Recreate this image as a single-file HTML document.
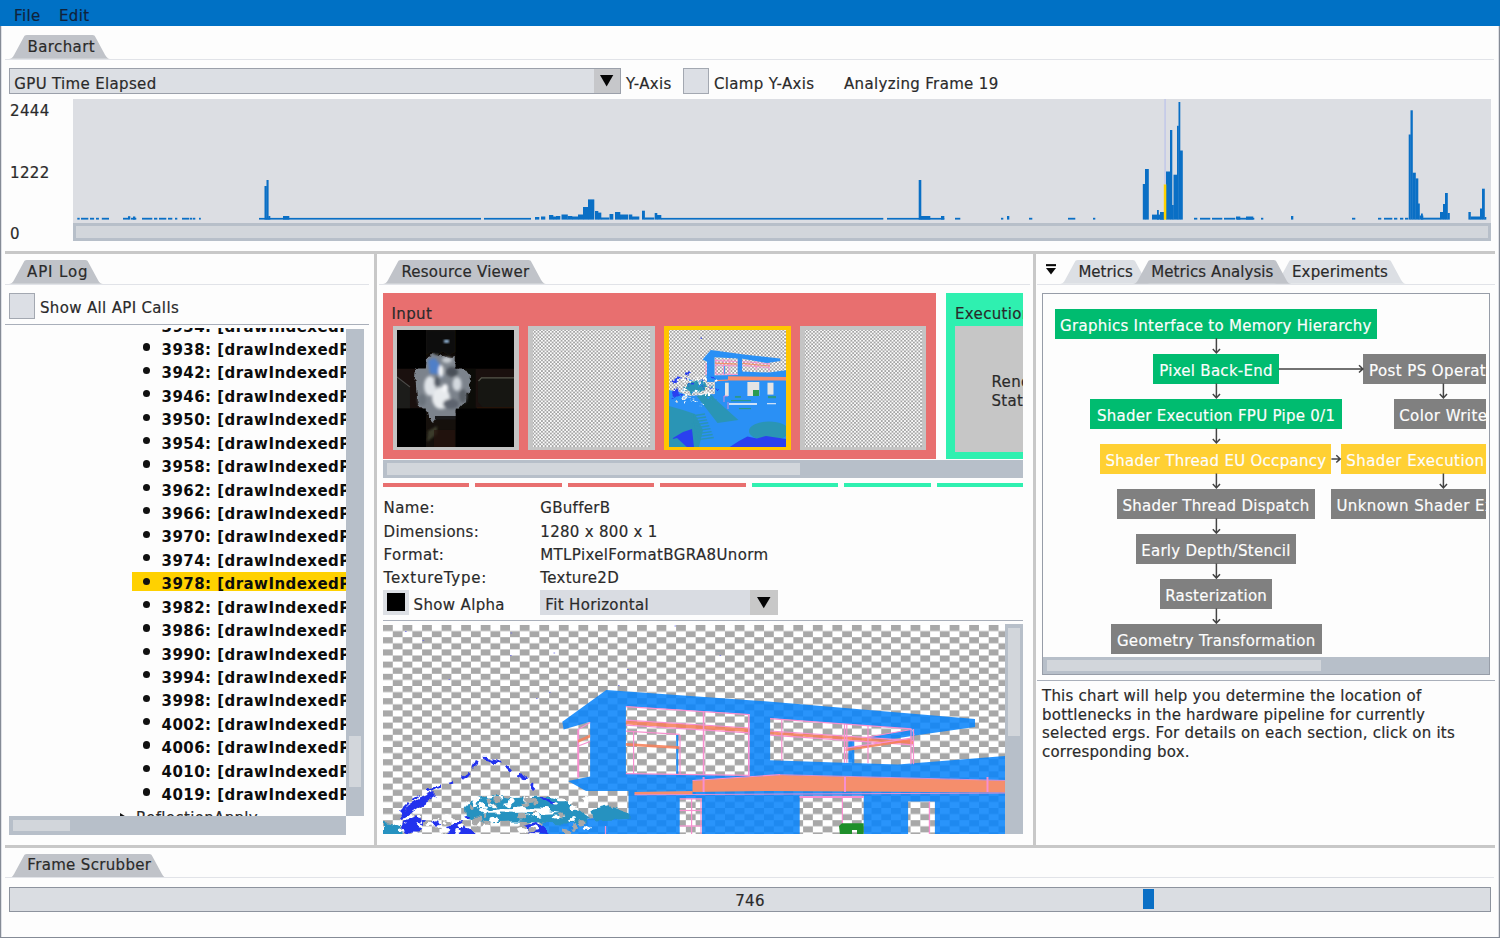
<!DOCTYPE html>
<html><head><meta charset="utf-8"><title>Frame Analyzer</title>
<style>
html,body{margin:0;padding:0;}
body{width:1500px;height:938px;overflow:hidden;background:#fdfdfd;position:relative;font-family:"DejaVu Sans","Liberation Sans",sans-serif;font-size:15px;letter-spacing:0.34px;color:#2a2a2a;-webkit-text-stroke-width:0.18px;}
.abs{position:absolute;}
.t{position:absolute;white-space:nowrap;line-height:20px;height:20px;margin-top:2px;}
#menubar{left:0;top:0;width:1500px;height:26px;background:#0071c5;}
#frame{left:0;top:26px;width:1498px;height:911px;border-left:1px solid #858b96;border-right:1px solid #858b96;border-bottom:1px solid #858b96;box-shadow:inset 1px 0 0 #dfe1e6, inset -1px 0 0 #dfe1e6;}
.hsplit{background:#c8c8c8;height:3px;left:5px;width:1490px;}
.vsplit{background:#c8c8c8;width:3px;}
.tabline{height:1px;background:#e1e3e8;}
.dline{height:1px;background:#a9afba;}
.tab{position:absolute;height:24px;}
.tab svg{position:absolute;left:0;top:0;}
.cb{position:absolute;width:24px;height:24px;border:1px solid #a3a8b1;background:#dcdfe5;}
.track{position:absolute;background:#b7bfc9;}
.thumb{position:absolute;background:#d2d6db;}
.row{position:absolute;left:161px;white-space:nowrap;font-weight:bold;color:#0c0c0c;-webkit-text-stroke-width:0;letter-spacing:0.45px;line-height:20px;height:20px;}
.row::before{content:"";position:absolute;left:-18.5px;top:3.4px;width:7.2px;height:7.2px;border-radius:50%;background:#111;}
.nb{position:absolute;height:30px;line-height:30px;color:#fdfdfd;white-space:nowrap;text-align:center;letter-spacing:0.28px;overflow:hidden;}
.nb span{position:relative;top:2px;}
.g{background:#00bc70;} .y{background:#ffd033;} .k{background:#808080;}
</style></head><body>
<div class="abs" id="menubar"></div>
<div class="abs" id="frame"></div>
<div class="t" style="left:14px;top:4px;color:#10233a">File</div>
<div class="t" style="left:59px;top:4px;color:#10233a">Edit</div>

<!-- BARCHART PANEL -->
<div id="barchart"><div class="tab" style="left:9.2px;top:35.2px;width:101.2px"><svg width="101.2" height="23.8"><path d="M0 23.8 C2 23.8 3.6 22.8 5.2 19.8 L14.8 2 C15.3 0.8 16.1 0 17.8 0 L83.4 0 C85.10000000000001 0 85.9 0.8 86.4 2 L96.0 19.8 C97.60000000000001 22.8 99.2 23.8 101.2 23.8 Z" fill="#c0c3c9"/></svg><div class="t" style="left:18.3px;top:-0.2px;letter-spacing:0.4px">Barchart</div></div>
<div class="abs tabline" style="left:5px;top:59px;width:1489px"></div>
<div class="abs" style="left:9px;top:68px;width:609.6px;height:24px;border:1px solid #9ba0aa;background:#dcdfe4"></div>
<div class="abs" style="left:593.6px;top:69px;width:26px;height:24px;background:#c6c7ca"></div>
<svg class="abs" style="left:600.4px;top:74.8px" width="14" height="12"><path d="M0 0 L13.3 0 L6.65 11.5 Z" fill="#050505"/></svg>
<div class="t" style="left:14.3px;top:72px">GPU Time Elapsed</div>
<div class="t" style="left:626px;top:72px">Y-Axis</div>
<div class="cb" style="left:683px;top:68px"></div>
<div class="t" style="left:714px;top:72px">Clamp Y-Axis</div>
<div class="t" style="left:844px;top:72px">Analyzing Frame 19</div>
<div class="t" style="left:10px;top:99px">2444</div>
<div class="t" style="left:10px;top:161px">1222</div>
<div class="t" style="left:10px;top:222.3px">0</div>
<svg class="abs" style="left:72.8px;top:98.6px;background:#dcdee3" width="1418" height="124"><rect x="4.3" y="118.8" width="2.4" height="1.8" fill="#0a6fc5"/><rect x="8.0" y="118.8" width="7.3" height="1.8" fill="#0a6fc5"/><rect x="17.0" y="118.8" width="4.1" height="1.8" fill="#0a6fc5"/><rect x="23.0" y="118.8" width="2.9" height="1.8" fill="#0a6fc5"/><rect x="28.8" y="118.8" width="7.2" height="1.8" fill="#0a6fc5"/><rect x="50.0" y="118.8" width="5.3" height="1.8" fill="#0a6fc5"/><rect x="58.0" y="118.8" width="5.3" height="1.8" fill="#0a6fc5"/><rect x="69.0" y="118.8" width="10.3" height="1.8" fill="#0a6fc5"/><rect x="81.0" y="118.8" width="3.3" height="1.8" fill="#0a6fc5"/><rect x="86.0" y="118.8" width="7.3" height="1.8" fill="#0a6fc5"/><rect x="95.0" y="118.8" width="4.3" height="1.8" fill="#0a6fc5"/><rect x="102.0" y="118.8" width="2.3" height="1.8" fill="#0a6fc5"/><rect x="109.0" y="118.8" width="7.3" height="1.8" fill="#0a6fc5"/><rect x="117.0" y="118.8" width="2.3" height="1.8" fill="#0a6fc5"/><rect x="120.0" y="118.8" width="2.3" height="1.8" fill="#0a6fc5"/><rect x="126.0" y="118.8" width="1.8" height="1.8" fill="#0a6fc5"/><rect x="55.0" y="117.2" width="2.3" height="3.4" fill="#0a6fc5"/><rect x="60.0" y="117.5" width="2.3" height="3.1" fill="#0a6fc5"/><rect x="186.0" y="118.9" width="276.3" height="1.7" fill="#0a6fc5"/><rect x="191.5" y="87.0" width="2.3" height="33.6" fill="#0a6fc5"/><rect x="193.5" y="81.0" width="2.1" height="39.6" fill="#0a6fc5"/><rect x="195.3" y="117.0" width="2.0" height="3.6" fill="#0a6fc5"/><rect x="210.0" y="117.0" width="6.3" height="3.6" fill="#0a6fc5"/><rect x="462.0" y="118.0" width="4.3" height="2.6" fill="#0a6fc5"/><rect x="468.0" y="117.5" width="4.3" height="3.1" fill="#0a6fc5"/><rect x="476.0" y="116.0" width="4.3" height="4.6" fill="#0a6fc5"/><rect x="480.0" y="117.5" width="3.3" height="3.1" fill="#0a6fc5"/><rect x="483.0" y="117.0" width="4.3" height="3.6" fill="#0a6fc5"/><rect x="488.5" y="115.5" width="6.3" height="5.1" fill="#0a6fc5"/><rect x="494.5" y="117.0" width="4.8" height="3.6" fill="#0a6fc5"/><rect x="499.0" y="117.5" width="6.3" height="3.1" fill="#0a6fc5"/><rect x="505.0" y="115.5" width="5.3" height="5.1" fill="#0a6fc5"/><rect x="510.0" y="108.0" width="5.3" height="12.6" fill="#0a6fc5"/><rect x="515.0" y="100.4" width="6.3" height="20.2" fill="#0a6fc5"/><rect x="522.0" y="112.0" width="3.3" height="8.6" fill="#0a6fc5"/><rect x="525.0" y="113.6" width="3.3" height="7.0" fill="#0a6fc5"/><rect x="528.0" y="118.5" width="8.3" height="2.1" fill="#0a6fc5"/><rect x="536.5" y="115.0" width="3.8" height="5.6" fill="#0a6fc5"/><rect x="542.0" y="113.0" width="5.3" height="7.6" fill="#0a6fc5"/><rect x="547.0" y="115.5" width="8.3" height="5.1" fill="#0a6fc5"/><rect x="556.0" y="115.5" width="3.3" height="5.1" fill="#0a6fc5"/><rect x="559.0" y="117.5" width="7.3" height="3.1" fill="#0a6fc5"/><rect x="569.0" y="111.7" width="2.9" height="8.9" fill="#0a6fc5"/><rect x="571.6" y="118.5" width="9.7" height="2.1" fill="#0a6fc5"/><rect x="581.7" y="114.0" width="2.6" height="6.6" fill="#0a6fc5"/><rect x="584.0" y="116.0" width="4.3" height="4.6" fill="#0a6fc5"/><rect x="588.0" y="118.9" width="222.3" height="1.7" fill="#0a6fc5"/><rect x="814.0" y="118.9" width="57.3" height="1.7" fill="#0a6fc5"/><rect x="845.7" y="81.0" width="2.6" height="39.6" fill="#0a6fc5"/><rect x="848.0" y="117.0" width="9.3" height="3.6" fill="#0a6fc5"/><rect x="868.0" y="117.0" width="3.3" height="3.6" fill="#0a6fc5"/><rect x="882.0" y="118.8" width="5.3" height="1.8" fill="#0a6fc5"/><rect x="928.0" y="118.8" width="2.3" height="1.8" fill="#0a6fc5"/><rect x="956.0" y="118.8" width="3.3" height="1.8" fill="#0a6fc5"/><rect x="995.0" y="118.8" width="7.3" height="1.8" fill="#0a6fc5"/><rect x="1020.0" y="118.8" width="2.3" height="1.8" fill="#0a6fc5"/><rect x="934.0" y="117.0" width="2.3" height="3.6" fill="#0a6fc5"/><rect x="1069.8" y="85.0" width="2.5" height="35.6" fill="#0a6fc5"/><rect x="1072.0" y="70.0" width="3.8" height="50.6" fill="#0a6fc5"/><rect x="1079.0" y="115.6" width="12.1" height="5.0" fill="#0a6fc5"/><rect x="1084.0" y="111.0" width="1.8" height="9.6" fill="#0a6fc5"/><rect x="1087.0" y="113.0" width="4.1" height="7.6" fill="#0a6fc5"/><rect x="1093.0" y="72.5" width="4.3" height="48.1" fill="#0a6fc5"/><rect x="1097.0" y="31.0" width="2.3" height="89.6" fill="#0a6fc5"/><rect x="1099.0" y="106.0" width="1.8" height="14.6" fill="#0a6fc5"/><rect x="1100.5" y="75.7" width="3.8" height="44.9" fill="#0a6fc5"/><rect x="1104.0" y="26.8" width="1.8" height="93.8" fill="#0a6fc5"/><rect x="1105.5" y="3.0" width="1.8" height="117.6" fill="#0a6fc5"/><rect x="1107.0" y="51.5" width="2.8" height="69.1" fill="#0a6fc5"/><rect x="1090.8" y="85.3" width="2.5" height="35.3" fill="#ffd200"/><rect x="1091.2" y="0" width="1.8" height="85.3" fill="#c6cbe8"/><rect x="1121.0" y="118.8" width="3.3" height="1.8" fill="#0a6fc5"/><rect x="1127.0" y="118.8" width="10.3" height="1.8" fill="#0a6fc5"/><rect x="1139.0" y="118.8" width="10.3" height="1.8" fill="#0a6fc5"/><rect x="1151.0" y="118.8" width="11.3" height="1.8" fill="#0a6fc5"/><rect x="1164.0" y="118.8" width="17.3" height="1.8" fill="#0a6fc5"/><rect x="1188.0" y="118.8" width="2.3" height="1.8" fill="#0a6fc5"/><rect x="1279.0" y="118.8" width="3.3" height="1.8" fill="#0a6fc5"/><rect x="1305.0" y="118.8" width="3.3" height="1.8" fill="#0a6fc5"/><rect x="1311.0" y="118.8" width="8.3" height="1.8" fill="#0a6fc5"/><rect x="1321.0" y="118.8" width="3.3" height="1.8" fill="#0a6fc5"/><rect x="1327.0" y="118.8" width="3.3" height="1.8" fill="#0a6fc5"/><rect x="1332.0" y="118.8" width="3.3" height="1.8" fill="#0a6fc5"/><rect x="1163.0" y="117.5" width="4.3" height="3.1" fill="#0a6fc5"/><rect x="1173.0" y="117.5" width="7.3" height="3.1" fill="#0a6fc5"/><rect x="1218.0" y="117.0" width="2.3" height="3.6" fill="#0a6fc5"/><rect x="1335.7" y="35.5" width="2.1" height="85.1" fill="#0a6fc5"/><rect x="1337.5" y="11.3" width="2.3" height="109.3" fill="#0a6fc5"/><rect x="1339.5" y="73.7" width="3.3" height="46.9" fill="#0a6fc5"/><rect x="1342.5" y="79.4" width="2.8" height="41.2" fill="#0a6fc5"/><rect x="1345.0" y="104.5" width="1.8" height="16.1" fill="#0a6fc5"/><rect x="1346.5" y="116.5" width="3.8" height="4.1" fill="#0a6fc5"/><rect x="1348.0" y="114.5" width="1.8" height="6.1" fill="#0a6fc5"/><rect x="1350.0" y="118.7" width="17.3" height="1.9" fill="#0a6fc5"/><rect x="1367.0" y="113.0" width="3.3" height="7.6" fill="#0a6fc5"/><rect x="1370.0" y="105.0" width="2.3" height="15.6" fill="#0a6fc5"/><rect x="1372.0" y="94.0" width="2.8" height="26.6" fill="#0a6fc5"/><rect x="1374.5" y="114.0" width="2.3" height="6.6" fill="#0a6fc5"/><rect x="1395.4" y="113.0" width="2.4" height="7.6" fill="#0a6fc5"/><rect x="1397.5" y="117.5" width="9.8" height="3.1" fill="#0a6fc5"/><rect x="1407.0" y="109.5" width="2.3" height="11.1" fill="#0a6fc5"/><rect x="1409.0" y="89.7" width="2.8" height="30.9" fill="#0a6fc5"/><rect x="1411.5" y="118.0" width="1.8" height="2.6" fill="#0a6fc5"/><rect x="408" y="115" width="3" height="6" fill="#dcdee3"/><rect x="458" y="115" width="4" height="6" fill="#dcdee3"/></svg>
<div class="track" style="left:72.8px;top:222.8px;width:1418px;height:18.3px"></div>
<div class="thumb" style="left:75.9px;top:225.9px;width:1411.8px;height:12.2px"></div>
<div class="abs hsplit" style="top:251px"></div>
</div><!--/barchart-->
<!-- API LOG -->
<div id="apilog"><div class="tab" style="left:9px;top:260.3px;width:94px"><svg width="94" height="23.8"><path d="M0 23.8 C2 23.8 3.6 22.8 5.2 19.8 L14.8 2 C15.3 0.8 16.1 0 17.8 0 L76.2 0 C77.9 0 78.7 0.8 79.2 2 L88.8 19.8 C90.4 22.8 92 23.8 94 23.8 Z" fill="#c0c3c9"/></svg><div class="t" style="left:18.1px;top:-0.2px;letter-spacing:0.85px">API Log</div></div>
<div class="abs tabline" style="left:5px;top:284px;width:364px"></div>
<div class="cb" style="left:9px;top:293px"></div>
<div class="t" style="left:40px;top:296px">Show All API Calls</div>
<div class="abs dline" style="left:5px;top:324px;width:364px"></div>
<div class="abs" style="left:9px;top:328px;width:337px;height:488px;overflow:hidden"><div class="row" style="left:152.5px;top:-13.4px;margin-top:2px">3934: [drawIndexedPrimitives]</div><div class="row" style="left:152.5px;top:10.0px;margin-top:2px">3938: [drawIndexedPrimitives]</div><div class="row" style="left:152.5px;top:33.4px;margin-top:2px">3942: [drawIndexedPrimitives]</div><div class="row" style="left:152.5px;top:56.8px;margin-top:2px">3946: [drawIndexedPrimitives]</div><div class="row" style="left:152.5px;top:80.3px;margin-top:2px">3950: [drawIndexedPrimitives]</div><div class="row" style="left:152.5px;top:103.7px;margin-top:2px">3954: [drawIndexedPrimitives]</div><div class="row" style="left:152.5px;top:127.1px;margin-top:2px">3958: [drawIndexedPrimitives]</div><div class="row" style="left:152.5px;top:150.5px;margin-top:2px">3962: [drawIndexedPrimitives]</div><div class="row" style="left:152.5px;top:173.9px;margin-top:2px">3966: [drawIndexedPrimitives]</div><div class="row" style="left:152.5px;top:197.4px;margin-top:2px">3970: [drawIndexedPrimitives]</div><div class="row" style="left:152.5px;top:220.8px;margin-top:2px">3974: [drawIndexedPrimitives]</div><div class="abs" style="left:123.30000000000001px;top:244.2px;width:230px;height:18.4px;background:#ffd100"></div><div class="row" style="left:152.5px;top:244.2px;margin-top:2px">3978: [drawIndexedPrimitives]</div><div class="row" style="left:152.5px;top:267.6px;margin-top:2px">3982: [drawIndexedPrimitives]</div><div class="row" style="left:152.5px;top:291.0px;margin-top:2px">3986: [drawIndexedPrimitives]</div><div class="row" style="left:152.5px;top:314.5px;margin-top:2px">3990: [drawIndexedPrimitives]</div><div class="row" style="left:152.5px;top:337.9px;margin-top:2px">3994: [drawIndexedPrimitives]</div><div class="row" style="left:152.5px;top:361.3px;margin-top:2px">3998: [drawIndexedPrimitives]</div><div class="row" style="left:152.5px;top:384.7px;margin-top:2px">4002: [drawIndexedPrimitives]</div><div class="row" style="left:152.5px;top:408.1px;margin-top:2px">4006: [drawIndexedPrimitives]</div><div class="row" style="left:152.5px;top:431.6px;margin-top:2px">4010: [drawIndexedPrimitives]</div><div class="row" style="left:152.5px;top:455.0px;margin-top:2px">4019: [drawIndexedPrimitives]</div><div class="t" style="left:127px;top:478.4px">ReflectionApply</div><svg class="abs" style="left:110px;top:485.4px" width="10" height="10"><path d="M1 0 L9 5 L1 10 Z" fill="#111"/></svg></div>
<div class="track" style="left:346px;top:328.5px;width:18.1px;height:487.5px"></div>
<div class="thumb" style="left:349px;top:736px;width:12px;height:51.4px"></div>
<div class="track" style="left:9.3px;top:816px;width:336.7px;height:18.8px"></div>
<div class="thumb" style="left:12.6px;top:820.3px;width:57.4px;height:10.6px"></div>
<div class="abs vsplit" style="left:374px;top:254px;height:591px"></div>
<div class="abs vsplit" style="left:1032.5px;top:254px;height:591px;width:3.5px"></div>
<div class="abs hsplit" style="top:844.5px"></div>
</div><!--/apilog-->
<!-- RESOURCE VIEWER -->
<div id="resview"><div class="tab" style="left:383.2px;top:260.3px;width:163.2px"><svg width="163.2" height="23.8"><path d="M0 23.8 C2 23.8 3.6 22.8 5.2 19.8 L14.8 2 C15.3 0.8 16.1 0 17.8 0 L145.39999999999998 0 C147.09999999999997 0 147.89999999999998 0.8 148.39999999999998 2 L158.0 19.8 C159.6 22.8 161.2 23.8 163.2 23.8 Z" fill="#c0c3c9"/></svg><div class="t" style="left:18.2px;top:-0.2px;letter-spacing:0.23px">Resource Viewer</div></div>
<div class="abs tabline" style="left:378.5px;top:284px;width:651.5px"></div>
<div class="abs" style="left:383px;top:293px;width:640px;height:167px;overflow:hidden"><div class="abs" style="left:0.2px;top:0.2px;width:552.8px;height:166.3px;background:#e86f6f"></div><div class="t" style="left:8.6px;top:9.4px">Input</div><svg class="abs" width="0" height="0" style="left:0;top:0"><defs><pattern id="dots" width="3.57" height="3.57" patternUnits="userSpaceOnUse"><rect width="3.57" height="3.57" fill="#fbfbfb"/><rect x="0.892" y="0.892" width="1.785" height="1.785" fill="#a4a4a4"/><rect x="-0.892" y="-0.892" width="1.785" height="1.785" fill="#a4a4a4"/><rect x="2.677" y="-0.892" width="1.785" height="1.785" fill="#a4a4a4"/><rect x="-0.892" y="2.677" width="1.785" height="1.785" fill="#a4a4a4"/><rect x="2.677" y="2.677" width="1.785" height="1.785" fill="#a4a4a4"/></pattern></defs></svg><div class="abs" style="left:9.5px;top:33px;width:126.6px;height:124.3px;background:#c4c4c4"></div><div class="abs" id="th0" style="left:14.2px;top:36.5px;width:117.2px;height:117.2px;background:#000;overflow:hidden"><svg class="abs" style="left:0;top:0" width="117.2" height="117.2" viewBox="0 0 117.2 117.2"><defs><filter id="b1" x="-20%" y="-20%" width="140%" height="140%"><feGaussianBlur stdDeviation="1.6"/></filter><filter id="b2" x="-20%" y="-20%" width="140%" height="140%"><feGaussianBlur stdDeviation="0.8"/></filter><filter id="cl" x="-10%" y="-10%" width="120%" height="120%"><feTurbulence type="fractalNoise" baseFrequency="0.12" numOctaves="3" seed="8" result="n"/><feDisplacementMap in="SourceGraphic" in2="n" scale="7" xChannelSelector="R" yChannelSelector="G"/></filter><clipPath id="cross"><path d="M28.8 0 H58.7 V38.5 H117.2 V78.5 H58.7 V117.2 H28.8 V78.5 H0 V38.5 H28.8 Z"/></clipPath></defs><rect width="117.2" height="117.2" fill="#000"/><g clip-path="url(#cross)"><rect x="28.8" y="0" width="29.9" height="117.2" fill="#120d0a"/><rect x="0" y="38.5" width="117.2" height="40" fill="#1a100e"/><rect x="58.7" y="38.5" width="20" height="40" fill="#0c0c08"/><path d="M84 47.5 H117.2 V78 H86 L81 72 V51 Z" fill="#161612"/><path d="M81.5 51 L84.5 47.8 H117.2" stroke="#55554a" stroke-width="1.3" fill="none"/><rect x="80" y="77.2" width="37.2" height="1.3" fill="#2a1408"/><path d="M0 48 L13 58 V78.5 H0 Z" fill="#1c1c1a"/><path d="M0 47 L13 57" stroke="#4a4a48" stroke-width="1.1"/><rect x="28.8" y="86" width="29.9" height="31.2" fill="#15100c"/><path d="M30 112 L31 101 L40 96 L40 104 Z" fill="#3a3a2c" filter="url(#b2)"/><rect x="37" y="100" width="21" height="17" fill="#26140e" opacity="0.7"/><g filter="url(#cl)"><path d="M30 26 L40 24 L50 28 L58.7 26 V38.5 L68 39 L73 46 L72 60 L68 72 L62 78.5 H58.7 V86 L40 86.5 L36 92 L32 88 L29 78.5 L22 78 L19 66 L17.5 50 L19 39 L28.8 38.5 Z" fill="#7c838c"/></g><g filter="url(#b1)"><ellipse cx="44" cy="68" rx="9" ry="11" fill="#e8ebee"/><ellipse cx="33" cy="56" rx="6" ry="10" fill="#dfe3e8"/><ellipse cx="60" cy="54" rx="4.5" ry="7" fill="#d4d9df"/><ellipse cx="50" cy="30" rx="5" ry="3" fill="#c8cdd3"/><path d="M31 30 L38 28 L44 36 L46 48 L40 44 L33 44 Z" fill="#4f7fc8"/><ellipse cx="55" cy="42" rx="6" ry="5" fill="#4a5058"/><ellipse cx="54" cy="74" rx="8" ry="5" fill="#5d646e"/><ellipse cx="25" cy="70" rx="4" ry="6" fill="#6a727c"/><ellipse cx="44" cy="41" rx="2.5" ry="6" fill="#f4f6f8"/><ellipse cx="66" cy="66" rx="4" ry="7" fill="#5a6068"/><ellipse cx="40" cy="52" rx="3" ry="5" fill="#555c66"/><ellipse cx="48" cy="58" rx="3" ry="4" fill="#f6f7f9"/></g><path d="M28.8 0 H58.7 V22 L52 26 L46 22 L40 25 L34 22 L28.8 26 Z" fill="#0e0c08" filter="url(#b2)"/><rect x="47" y="10" width="5" height="2.6" fill="#a8d0f8" filter="url(#b2)"/><rect x="38" y="86" width="20.7" height="3.5" fill="#1a1a1c"/></g></svg></div><!--/th0--><div class="abs" style="left:145.3px;top:33px;width:126.6px;height:124.3px;background:#c4c4c4"></div><div class="abs" style="left:150.0px;top:36.5px;width:117.2px;height:117.2px;overflow:hidden"><svg class="abs" style="left:0;top:0" width="117.2" height="117.2"><rect width="117.2" height="117.2" fill="url(#dots)"/></svg></div><div class="abs" style="left:281.1px;top:33px;width:126.6px;height:124.3px;background:#ffc600"></div><div class="abs" id="th2" style="left:285.8px;top:36.5px;width:117.2px;height:117.2px;overflow:hidden"><svg class="abs" style="left:0;top:0" width="117.2" height="117.2"><rect width="117.2" height="117.2" fill="url(#dots)"/></svg><svg class="abs" style="left:0;top:0" width="117.2" height="117.2" viewBox="0 0 117.2 117.2"><polygon points="0.0,60.0 10.0,62.0 20.0,66.0 46.0,64.0 46.0,50.0 117.2,50.0 117.2,117.2 0.0,117.2" fill="#2a90f5" /><polygon points="41.8,19.9 75.0,24.5 111.2,28.4 111.5,31.0 98.0,33.0 73.9,28.8 45.5,27.3 38.0,31.8 33.6,29.6" fill="#2a90f5" /><polygon points="38.0,29.0 45.5,27.0 45.5,52.0 38.0,52.0" fill="#2a90f5" /><polygon points="68.7,27.0 73.1,27.5 73.1,45.0 68.7,45.0" fill="#2a90f5" /><polygon points="38.0,45.4 68.7,45.0 73.0,41.5 100.0,42.6 117.2,40.2 117.2,50.0 38.0,50.5" fill="#2a90f5" /><polygon points="59.0,46.2 117.2,47.0 117.2,50.6 59.0,50.6" fill="#f58e6c" /><polygon points="46.0,50.0 59.0,49.6 59.0,50.8 46.0,51.2" fill="#f58e6c" /><rect x="56" y="52.7" width="3.7" height="13.3" fill="#e4e4e4"/><rect x="78.4" y="52" width="11.9" height="14.0" fill="#e4e4e4"/><rect x="98.5" y="52.7" width="6.0" height="11.9" fill="#e4e4e4"/><rect x="84" y="60" width="6" height="6" fill="#2a9a50"/><line x1="46.0" y1="30.5" x2="68.5" y2="31.5" stroke="#f78fcf" stroke-width="0.9"/><line x1="46.0" y1="35.0" x2="68.5" y2="36.0" stroke="#f78fcf" stroke-width="0.9"/><line x1="47.0" y1="29.0" x2="47.0" y2="44.0" stroke="#f78fcf" stroke-width="0.9"/><line x1="54.5" y1="29.0" x2="54.5" y2="44.0" stroke="#f78fcf" stroke-width="0.9"/><line x1="60.0" y1="28.5" x2="60.0" y2="44.5" stroke="#f78fcf" stroke-width="0.9"/><line x1="46.0" y1="44.0" x2="68.5" y2="44.5" stroke="#f78fcf" stroke-width="0.9"/><line x1="73.5" y1="31.5" x2="101.0" y2="34.0" stroke="#f78fcf" stroke-width="0.9"/><line x1="73.5" y1="35.5" x2="100.0" y2="37.5" stroke="#f78fcf" stroke-width="0.9"/><line x1="87.0" y1="31.0" x2="87.0" y2="40.0" stroke="#f78fcf" stroke-width="0.9"/><line x1="100.0" y1="33.0" x2="100.0" y2="41.5" stroke="#f78fcf" stroke-width="0.9"/><line x1="37.0" y1="33.0" x2="37.0" y2="45.0" stroke="#f78fcf" stroke-width="0.9"/><line x1="46.0" y1="33.2" x2="68.5" y2="34.2" stroke="#f58e6c" stroke-width="1.2"/><line x1="73.5" y1="33.4" x2="101.0" y2="36.0" stroke="#f58e6c" stroke-width="1.1"/><line x1="55.6" y1="36.0" x2="55.6" y2="44.0" stroke="#2a90f5" stroke-width="0.9"/><line x1="55.0" y1="66.0" x2="55.0" y2="72.0" stroke="#f78fcf" stroke-width="0.8"/><line x1="55.0" y1="66.0" x2="59.0" y2="66.0" stroke="#f78fcf" stroke-width="0.8"/><line x1="59.0" y1="72.0" x2="59.0" y2="79.0" stroke="#f78fcf" stroke-width="0.8"/><polygon points="27.6,66.0 40.0,63.5 56.0,78.0 69.4,90.0 48.5,93.0" fill="#2a95b5" /><polygon points="0.0,76.0 14.0,80.0 26.0,84.0 34.0,100.0 30.0,117.2 0.0,117.2" fill="#2a95b5" /><polygon points="4.0,108.0 14.0,102.0 23.0,99.0 25.0,117.2 3.0,117.2" fill="#2a40f0" /><polygon points="0.0,110.0 8.0,108.0 18.0,117.2 0.0,117.2" fill="#2a95b5" /><ellipse cx="100" cy="101" rx="20" ry="9.5" fill="#2a95b5"/><polygon points="60.4,117.2 70.0,111.0 78.4,106.4 88.0,108.5 97.0,106.0 117.2,109.0 117.2,117.2" fill="#2a40f0" /><rect x="24.0" y="85" width="12.0" height="1.4" fill="#2a95b5" transform="rotate(-8 24.0 85)"/><rect x="24.6" y="88" width="12.5" height="1.4" fill="#2a95b5" transform="rotate(-8 24.6 88)"/><rect x="25.2" y="91" width="13.0" height="1.4" fill="#2a95b5" transform="rotate(-8 25.2 91)"/><rect x="25.8" y="94" width="13.5" height="1.4" fill="#2a95b5" transform="rotate(-8 25.8 94)"/><rect x="26.4" y="97" width="14.0" height="1.4" fill="#2a95b5" transform="rotate(-8 26.4 97)"/><rect x="27.0" y="100" width="14.5" height="1.4" fill="#2a95b5" transform="rotate(-8 27.0 100)"/><rect x="27.6" y="103" width="15.0" height="1.4" fill="#2a95b5" transform="rotate(-8 27.6 103)"/><rect x="28.2" y="106" width="15.5" height="1.4" fill="#2a95b5" transform="rotate(-8 28.2 106)"/><rect x="28.8" y="109" width="16.0" height="1.4" fill="#2a95b5" transform="rotate(-8 28.8 109)"/><polygon points="22.0,84.0 24.0,84.0 27.0,112.0 25.0,112.0" fill="#2a95b5" /><filter id="rg3" x="-10%" y="-10%" width="120%" height="120%"><feTurbulence type="fractalNoise" baseFrequency="0.25" numOctaves="2" seed="5" result="n"/><feDisplacementMap in="SourceGraphic" in2="n" scale="6" xChannelSelector="R" yChannelSelector="G"/></filter><g filter="url(#rg3)"><polygon points="14.0,58.0 22.0,52.0 30.0,50.0 38.0,53.0 36.0,60.0 24.0,63.0" fill="#2a95b5" /><rect x="24.1" y="61.7" width="2.4" height="1.6" fill="#dedede"/><rect x="29.5" y="51.2" width="2.4" height="1.8" fill="#f0f0f0"/><rect x="13.4" y="58.5" width="1.3" height="2.1" fill="#2a90f5"/><rect x="33.7" y="47.2" width="3.9" height="1.8" fill="#fff"/><rect x="30.6" y="50.4" width="3.5" height="0.9" fill="#2a40f0"/><rect x="7.4" y="70.6" width="1.1" height="1.5" fill="#f0f0f0"/><rect x="23.6" y="69.6" width="1.7" height="1.3" fill="#f0f0f0"/><rect x="6.2" y="48.4" width="1.8" height="2.4" fill="#2a95b5"/><rect x="45.8" y="69.5" width="1.8" height="2.0" fill="#2a95b5"/><rect x="26.5" y="46.8" width="3.3" height="1.4" fill="#f0f0f0"/><rect x="39.9" y="56.8" width="3.5" height="0.8" fill="#2a40f0"/><rect x="14.4" y="71.5" width="2.1" height="1.9" fill="#fff"/><rect x="22.8" y="61.9" width="3.3" height="1.2" fill="#2a90f5"/><rect x="9.5" y="55.3" width="3.3" height="1.0" fill="#fff"/><rect x="15.9" y="48.8" width="2.4" height="1.6" fill="#2a40f0"/><rect x="33.3" y="51.3" width="1.6" height="2.0" fill="#f0f0f0"/><rect x="11.2" y="64.0" width="2.2" height="2.4" fill="#2a40f0"/><rect x="6.0" y="70.2" width="2.8" height="2.4" fill="#dedede"/><rect x="6.8" y="51.2" width="2.8" height="1.7" fill="#dedede"/><rect x="7.7" y="50.1" width="1.8" height="2.0" fill="#fff"/><rect x="19.2" y="54.3" width="1.2" height="1.1" fill="#2a40f0"/><rect x="31.5" y="46.4" width="2.1" height="1.5" fill="#fff"/><rect x="44.4" y="59.5" width="1.4" height="1.4" fill="#f0f0f0"/><rect x="31.1" y="54.7" width="3.5" height="1.2" fill="#2a90f5"/><rect x="13.6" y="66.7" width="1.6" height="2.3" fill="#f0f0f0"/><rect x="41.3" y="62.9" width="1.1" height="1.0" fill="#fff"/><rect x="26.5" y="53.1" width="3.1" height="1.2" fill="#2a95b5"/><rect x="38.9" y="62.7" width="2.6" height="2.3" fill="#fff"/><rect x="45.1" y="49.5" width="2.7" height="2.2" fill="#fff"/><rect x="30.6" y="53.8" width="3.2" height="0.9" fill="#2a90f5"/><rect x="22.5" y="53.0" width="1.5" height="1.4" fill="#2a40f0"/><rect x="28.9" y="49.7" width="1.4" height="1.5" fill="#fff"/><rect x="19.2" y="66.5" width="2.8" height="1.0" fill="#f0f0f0"/><rect x="7.4" y="46.5" width="3.1" height="2.3" fill="#fff"/><rect x="6.9" y="63.8" width="1.2" height="1.3" fill="#fff"/><rect x="11.5" y="48.0" width="2.6" height="2.0" fill="#fff"/><rect x="42.0" y="66.6" width="1.4" height="2.3" fill="#2a95b5"/><rect x="19.7" y="48.4" width="3.7" height="2.2" fill="#fff"/><rect x="22.7" y="68.1" width="2.5" height="0.8" fill="#dedede"/><rect x="32.5" y="56.6" width="2.8" height="0.9" fill="#2a40f0"/><rect x="31.6" y="73.8" width="3.2" height="1.4" fill="#fff"/><rect x="35.4" y="62.3" width="2.4" height="1.7" fill="#fff"/><rect x="26.7" y="60.4" width="2.8" height="1.6" fill="#fff"/><rect x="15.2" y="65.6" width="3.3" height="1.9" fill="#fff"/><rect x="25.5" y="71.1" width="1.9" height="1.9" fill="#fff"/><rect x="14.1" y="50.7" width="3.0" height="1.5" fill="#fff"/><rect x="41.7" y="55.2" width="1.8" height="1.8" fill="#2a95b5"/><rect x="38.1" y="67.1" width="3.6" height="1.4" fill="#2a90f5"/><rect x="29.3" y="54.9" width="1.4" height="1.4" fill="#2a90f5"/><rect x="41.8" y="47.1" width="3.9" height="1.2" fill="#2a40f0"/><rect x="12.8" y="58.6" width="3.8" height="2.1" fill="#fff"/><rect x="21.3" y="60.6" width="1.9" height="2.1" fill="#2a95b5"/><rect x="45.3" y="58.7" width="3.5" height="1.2" fill="#2a40f0"/><rect x="30.3" y="65.0" width="2.7" height="1.3" fill="#fff"/><rect x="37.7" y="46.5" width="2.2" height="1.1" fill="#2a90f5"/><rect x="36.8" y="53.5" width="1.4" height="0.9" fill="#dedede"/><rect x="31.2" y="58.5" width="2.6" height="1.8" fill="#2a95b5"/><rect x="20.7" y="48.2" width="1.6" height="1.6" fill="#2a90f5"/><rect x="13.1" y="46.3" width="2.6" height="0.9" fill="#fff"/><rect x="15.1" y="67.8" width="3.1" height="1.6" fill="#f0f0f0"/><polygon points="2.0,52.0 10.0,46.0 12.0,48.0 5.0,54.0" fill="#2a40f0" /><polygon points="3.0,62.0 9.0,58.0 10.0,66.0 4.0,68.0" fill="#2a40f0" /><polygon points="16.0,44.0 20.0,40.0 22.0,42.0 18.0,46.0" fill="#2a40f0" /></g><rect x="60" y="73" width="28" height="2" fill="#e8eef8" opacity="0.85"/><rect x="98" y="73" width="9" height="1.3" fill="#e8eef8" opacity="0.85"/><rect x="66" y="66" width="6" height="1.8" fill="#2a9a70" opacity="0.8"/><rect x="99" y="66" width="8" height="2.2" fill="#2a9a70" opacity="0.8"/><rect x="62" y="70" width="20" height="1.2" fill="#2a9a70" opacity="0.8"/><rect x="70" y="78" width="12" height="1.2" fill="#2a9a70" opacity="0.8"/><rect x="31.5" y="7.5" width="1.5" height="1.5" fill="#5060e8"/></svg></div><!--/th2--><div class="abs" style="left:416.9px;top:33px;width:126.6px;height:124.3px;background:#c4c4c4"></div><div class="abs" style="left:421.6px;top:36.5px;width:117.2px;height:117.2px;overflow:hidden"><svg class="abs" style="left:0;top:0" width="117.2" height="117.2"><rect width="117.2" height="117.2" fill="url(#dots)"/></svg></div><div class="abs" style="left:563px;top:0.2px;width:100px;height:166.3px;background:#2ff0b0"></div><div class="t" style="left:572px;top:9px">Execution</div><div class="abs" style="left:572px;top:33.1px;width:100px;height:126px;background:#c6c6c6"></div><div class="t" style="left:608.5px;top:77.3px">Rend</div><div class="t" style="left:608.5px;top:96.2px">Stat</div></div>
<div class="track" style="left:383px;top:459.5px;width:640px;height:18.7px"></div>
<div class="thumb" style="left:386.5px;top:463px;width:413px;height:12px"></div>
<div class="abs" style="left:383.0px;top:483px;width:86.4px;height:3.7px;background:#e86f6f"></div><div class="abs" style="left:475.2px;top:483px;width:86.4px;height:3.7px;background:#e86f6f"></div><div class="abs" style="left:567.5px;top:483px;width:86.4px;height:3.7px;background:#e86f6f"></div><div class="abs" style="left:659.8px;top:483px;width:86.4px;height:3.7px;background:#e86f6f"></div><div class="abs" style="left:752.0px;top:483px;width:86.4px;height:3.7px;background:#2ff0b0"></div><div class="abs" style="left:844.2px;top:483px;width:86.4px;height:3.7px;background:#2ff0b0"></div><div class="abs" style="left:936.5px;top:483px;width:86.4px;height:3.7px;background:#2ff0b0"></div>
<div class="t" style="left:383.6px;top:496.2px;letter-spacing:0.4px">Name:</div><div class="t" style="left:540.3px;top:496.2px;letter-spacing:0.3px">GBufferB</div>
<div class="t" style="left:383.6px;top:519.7px;letter-spacing:0.25px">Dimensions:</div><div class="t" style="left:540.3px;top:519.7px;letter-spacing:0.3px">1280 x 800 x 1</div>
<div class="t" style="left:383.6px;top:543.3px;letter-spacing:0.4px">Format:</div><div class="t" style="left:540.3px;top:543.3px;letter-spacing:0.36px">MTLPixelFormatBGRA8Unorm</div>
<div class="t" style="left:383.6px;top:566.2px;letter-spacing:0.75px">TextureType:</div><div class="t" style="left:540.3px;top:566.2px;letter-spacing:0.3px">Texture2D</div>
<div class="abs" style="left:383px;top:590px;width:25.8px;height:25.3px;background:#dcdfe4"></div><div class="abs" style="left:386.7px;top:593px;width:18.8px;height:18.4px;background:#000"></div><div class="t" style="left:413.6px;top:593.1px">Show Alpha</div>
<div class="abs" style="left:540.1px;top:590px;width:237.9px;height:25.2px;background:#d9dce2"></div><div class="abs" style="left:750px;top:590px;width:28px;height:25.2px;background:#c8c8c8"></div><svg class="abs" style="left:757.2px;top:596.8px" width="14" height="12"><path d="M0 0 L13.5 0 L6.75 11.3 Z" fill="#050505"/></svg><div class="t" style="left:545.3px;top:593.1px">Fit Horizontal</div>
<div class="abs dline" style="left:383px;top:620.3px;width:640px"></div>
<div class="abs" id="bigimg" style="left:383px;top:625px;width:621.5px;height:209.4px;overflow:hidden;background-color:#fff;background-image:conic-gradient(#fff 25%,#a8a8a8 0 50%,#fff 0 75%,#a8a8a8 0);background-size:19.54px 12.2px"><svg class="abs" style="left:0;top:0" width="621.5" height="209.4" viewBox="383 625 621.5 209.4"><defs><pattern id="ck" x="383" y="625" width="19.54" height="12.2" patternUnits="userSpaceOnUse"><rect width="19.54" height="12.2" fill="#fff"/><rect width="9.77" height="6.1" fill="#a8a8a8"/><rect x="9.77" y="6.1" width="9.77" height="6.1" fill="#a8a8a8"/></pattern></defs><rect x="383" y="625" width="622" height="210" fill="url(#ck)"/><path d="M606.3 689.9 L780.0 702.4 L975.0 718.9 L975.0 726.9 L915.0 735.5 L912.0 729.0 L770.1 718.3 L770.1 760.2 L843.0 762.7 L898.0 764.5 L1005.0 755.9 L1005.0 835.0 L539.0 835.0 L543.0 823.0 L556.0 818.5 L590.0 818.5 L628.5 815.0 L628.5 791.0 L586.0 791.0 L568.0 781.0 L590.1 776.5 L590.1 721.8 L563.6 729.5 L562.3 721.8 Z M625.9 706.2 L749.6 714.3 L749.6 775.5 L625.9 773.8 Z M679.7 798.6 L701.9 798.6 L701.9 835.0 L679.7 835.0 Z M799.7 795.7 L863.7 795.7 L863.7 835.0 L799.7 835.0 Z M908.1 801.5 L934.9 801.5 L934.9 835.0 L908.1 835.0 Z " fill="rgba(9,132,250,0.87)" fill-rule="evenodd"/><polygon points="868.0,737.2 911.5,729.2 915.0,735.5 880.0,741.0" fill="rgba(9,132,250,0.87)" /><polygon points="848.4,741.4 854.3,740.5 854.3,762.9 848.4,762.7" fill="rgba(9,132,250,0.87)" /><polygon points="676.2,735.0 678.2,735.0 678.2,774.5 676.2,774.5" fill="rgba(9,132,250,0.87)" /><polygon points="692.5,780.7 780.0,774.9 868.8,777.3 1005.0,780.7 1005.0,792.6 775.0,790.9 692.5,792.0" fill="#f58e6c" /><polygon points="634.5,792.0 692.5,791.0 692.5,794.2 634.5,794.7" fill="#f58e6c" /><line x1="625.9" y1="706.6" x2="749.6" y2="714.6" stroke="#f78fcf" stroke-width="1.2"/><polygon points="625.9,720.5 749.6,728.3 749.6,732.3 625.9,724.6" fill="rgba(246,128,88,0.87)" /><line x1="625.9" y1="720.2" x2="749.6" y2="728.0" stroke="#f78fcf" stroke-width="1.2"/><line x1="625.9" y1="725.2" x2="749.6" y2="732.8" stroke="#f78fcf" stroke-width="1.2"/><line x1="625.9" y1="731.2" x2="679.7" y2="734.3" stroke="#f78fcf" stroke-width="1.2"/><polygon points="625.9,743.0 679.7,746.3 679.7,749.0 625.9,745.8" fill="rgba(246,128,88,0.87)" /><line x1="633.6" y1="731.5" x2="633.6" y2="774.0" stroke="#f78fcf" stroke-width="1.2"/><line x1="680.0" y1="735.0" x2="680.0" y2="774.5" stroke="#f78fcf" stroke-width="1.2"/><line x1="703.6" y1="711.5" x2="703.6" y2="774.8" stroke="#f78fcf" stroke-width="1.6"/><line x1="748.8" y1="714.5" x2="748.8" y2="775.5" stroke="#f78fcf" stroke-width="1.6"/><line x1="625.9" y1="773.6" x2="749.6" y2="775.3" stroke="#f78fcf" stroke-width="1.2"/><line x1="578.2" y1="729.5" x2="578.2" y2="777.5" stroke="#f78fcf" stroke-width="2"/><line x1="578.2" y1="729.5" x2="590.1" y2="722.5" stroke="#f78fcf" stroke-width="1.2"/><polygon points="578.2,739.8 590.1,734.6 590.1,737.6 578.2,742.8" fill="rgba(246,128,88,0.87)" /><line x1="578.2" y1="746.0" x2="590.1" y2="741.5" stroke="#f78fcf" stroke-width="1.2"/><line x1="770.1" y1="718.6" x2="911.5" y2="728.8" stroke="#f78fcf" stroke-width="1.2"/><polygon points="770.1,731.5 913.0,741.0 913.0,744.3 770.1,734.6" fill="rgba(246,128,88,0.87)" /><line x1="770.1" y1="731.0" x2="913.0" y2="740.6" stroke="#f78fcf" stroke-width="1.2"/><line x1="770.1" y1="735.2" x2="913.0" y2="744.8" stroke="#f78fcf" stroke-width="1.2"/><polygon points="845.5,748.6 911.5,738.5 911.5,741.0 845.5,751.2" fill="rgba(246,128,88,0.87)" /><line x1="845.5" y1="748.2" x2="911.5" y2="738.2" stroke="#f78fcf" stroke-width="1.2"/><line x1="868.0" y1="737.0" x2="911.5" y2="729.5" stroke="#f78fcf" stroke-width="1.2"/><line x1="781.8" y1="720.0" x2="781.8" y2="760.5" stroke="#f78fcf" stroke-width="1.2"/><line x1="844.5" y1="724.0" x2="844.5" y2="762.8" stroke="#f78fcf" stroke-width="1.2"/><line x1="846.8" y1="724.0" x2="846.8" y2="762.8" stroke="#f78fcf" stroke-width="1.2"/><line x1="868.0" y1="726.0" x2="868.0" y2="763.3" stroke="#f78fcf" stroke-width="1.2"/><line x1="911.0" y1="729.0" x2="911.0" y2="764.2" stroke="#f78fcf" stroke-width="1.2"/><line x1="913.5" y1="729.0" x2="913.5" y2="764.2" stroke="#f78fcf" stroke-width="1.2"/><line x1="703.6" y1="777.0" x2="703.6" y2="792.0" stroke="#f78fcf" stroke-width="2"/><line x1="845.0" y1="777.0" x2="845.0" y2="792.0" stroke="#f78fcf" stroke-width="2"/><line x1="987.5" y1="777.0" x2="987.5" y2="792.0" stroke="#f78fcf" stroke-width="2"/><line x1="692.5" y1="780.5" x2="780.0" y2="774.7" stroke="#f78fcf" stroke-width="1.2"/><line x1="780.0" y1="774.7" x2="1005.0" y2="780.5" stroke="#f78fcf" stroke-width="0.8"/><line x1="634.5" y1="794.8" x2="1005.0" y2="793.0" stroke="#f78fcf" stroke-width="0.9"/><line x1="691.6" y1="798.6" x2="691.6" y2="835.0" stroke="#f78fcf" stroke-width="1.2"/><line x1="701.0" y1="798.6" x2="701.0" y2="835.0" stroke="#f78fcf" stroke-width="1.2"/><line x1="679.7" y1="810.5" x2="701.9" y2="810.5" stroke="#f78fcf" stroke-width="1.2"/><line x1="679.7" y1="826.0" x2="701.9" y2="826.0" stroke="#f78fcf" stroke-width="1.2"/><line x1="679.7" y1="798.9" x2="701.9" y2="798.9" stroke="#f78fcf" stroke-width="1.2"/><line x1="799.7" y1="796.6" x2="863.7" y2="796.6" stroke="#f78fcf" stroke-width="1.2"/><line x1="842.4" y1="796.0" x2="842.4" y2="835.0" stroke="#f78fcf" stroke-width="1.2"/><line x1="929.4" y1="801.5" x2="929.4" y2="835.0" stroke="#f78fcf" stroke-width="1.2"/><line x1="605.5" y1="826.0" x2="605.5" y2="835.0" stroke="#f78fcf" stroke-width="1.2"/><line x1="799.7" y1="797.0" x2="863.7" y2="797.0" stroke="#f78fcf" stroke-width="2"/><polygon points="839.0,826.0 842.0,823.3 863.7,823.3 863.7,835.0 857.0,835.0 857.0,830.0 852.0,830.0 852.0,835.0 840.0,835.0" fill="#1f8f2a" /><filter id="rg" x="-5%" y="-5%" width="110%" height="110%"><feTurbulence type="fractalNoise" baseFrequency="0.09" numOctaves="2" seed="3" result="n"/><feDisplacementMap in="SourceGraphic" in2="n" scale="9" xChannelSelector="R" yChannelSelector="G"/></filter><g filter="url(#rg)"><polygon points="465.0,808.7 472.0,799.0 486.0,795.5 500.0,795.0 515.0,798.0 532.0,797.0 548.0,796.5 565.0,801.0 578.0,811.0 590.0,820.0 575.0,824.0 549.6,823.0 515.3,821.4 481.0,822.4 466.3,818.5" fill="#2792c0" /><polygon points="478.0,813.0 500.0,808.0 540.0,808.5 560.0,812.0 540.0,813.0 500.0,812.5" fill="#fff" /><polygon points="591.3,810.0 608.4,806.2 628.5,813.0 628.5,819.0 593.7,820.5" fill="#2792c0" /><polygon points="383.0,823.0 402.0,826.0 404.0,835.0 383.0,835.0" fill="#2792c0" /><path d="M400.0 812.0 L412.0 800.0 L425.0 793.0 L438.0 786.0 L456.0 781.0 L468.0 776.0 L473.0 770.0 L476.5 762.0 L486.0 758.3 L500.0 762.0 L511.0 771.0 L525.0 779.0 L535.0 791.0 L546.0 800.0 L556.0 806.0" fill="none" stroke="#2233ee" stroke-width="3" stroke-dasharray="12 6 6 10 16 7 4 9" stroke-linecap="butt"/><polygon points="400.0,812.0 418.0,800.0 434.0,792.0 437.0,795.0 420.0,806.0 406.0,816.0 401.0,817.0" fill="#2233ee" /><polygon points="404.0,820.0 416.0,816.0 424.0,822.0 420.0,832.0 409.0,834.0 403.0,829.0" fill="#2233ee" /><polygon points="446.0,826.0 458.0,823.0 470.0,829.0 476.0,834.0 452.0,834.0" fill="#2233ee" /><polygon points="524.0,825.0 536.0,822.0 548.0,829.0 552.0,834.0 530.0,833.0" fill="#2233ee" /><ellipse cx="506.9" cy="802.3" rx="3.5" ry="1.1" fill="#fff"/><ellipse cx="511.9" cy="799.0" rx="3.0" ry="1.1" fill="#fff"/><ellipse cx="476.4" cy="800.2" rx="2.8" ry="2.7" fill="#fff"/><ellipse cx="494.8" cy="819.0" rx="4.3" ry="2.2" fill="#fff"/><ellipse cx="585.2" cy="798.6" rx="4.1" ry="1.6" fill="#fff"/><ellipse cx="482.1" cy="807.8" rx="3.9" ry="1.4" fill="#fff"/><ellipse cx="544.7" cy="810.0" rx="3.1" ry="1.1" fill="#fff"/><ellipse cx="492.7" cy="820.8" rx="2.8" ry="1.6" fill="#fff"/><ellipse cx="522.4" cy="807.5" rx="3.9" ry="2.4" fill="#fff"/><ellipse cx="536.9" cy="815.4" rx="4.1" ry="2.5" fill="#fff"/><ellipse cx="585.6" cy="801.1" rx="2.8" ry="2.5" fill="#fff"/><ellipse cx="526.7" cy="798.4" rx="3.5" ry="2.5" fill="#fff"/><ellipse cx="573.1" cy="808.0" rx="3.6" ry="2.2" fill="#fff"/><ellipse cx="522.7" cy="826.4" rx="4.3" ry="1.9" fill="#a8a8a8"/><ellipse cx="475.3" cy="821.6" rx="3.4" ry="3.0" fill="#a8a8a8"/><ellipse cx="502.2" cy="810.5" rx="3.5" ry="1.0" fill="#fff"/><ellipse cx="488.2" cy="801.1" rx="1.7" ry="2.5" fill="#fff"/><ellipse cx="497.7" cy="810.7" rx="4.1" ry="1.2" fill="#fff"/><ellipse cx="533.9" cy="827.9" rx="4.0" ry="2.7" fill="#fff"/><ellipse cx="517.8" cy="809.6" rx="4.2" ry="2.9" fill="#fff"/><ellipse cx="489.1" cy="805.1" rx="2.2" ry="2.0" fill="#fff"/><ellipse cx="499.5" cy="797.1" rx="2.8" ry="1.7" fill="#fff"/><ellipse cx="582.4" cy="821.2" rx="3.0" ry="2.2" fill="#a8a8a8"/><ellipse cx="474.5" cy="828.5" rx="3.8" ry="2.7" fill="#a8a8a8"/><ellipse cx="515.1" cy="811.0" rx="1.8" ry="2.3" fill="#fff"/><ellipse cx="476.1" cy="804.3" rx="2.0" ry="1.7" fill="#fff"/><ellipse cx="468.0" cy="802.3" rx="1.8" ry="1.7" fill="#fff"/><ellipse cx="572.9" cy="818.5" rx="1.9" ry="1.5" fill="#fff"/><ellipse cx="511.7" cy="801.3" rx="4.0" ry="3.0" fill="#fff"/><ellipse cx="526.1" cy="800.0" rx="1.8" ry="1.7" fill="#fff"/><ellipse cx="567.5" cy="802.7" rx="1.6" ry="2.9" fill="#fff"/><ellipse cx="485.6" cy="816.0" rx="1.6" ry="2.1" fill="#a8a8a8"/><ellipse cx="571.6" cy="821.4" rx="2.3" ry="1.7" fill="#fff"/><ellipse cx="560.6" cy="815.6" rx="3.8" ry="1.7" fill="#fff"/><ellipse cx="565.4" cy="831.5" rx="4.1" ry="2.6" fill="#a8a8a8"/><ellipse cx="556.8" cy="804.9" rx="3.1" ry="1.7" fill="#fff"/><ellipse cx="471.4" cy="806.8" rx="2.3" ry="2.4" fill="#a8a8a8"/><ellipse cx="521.7" cy="829.8" rx="4.5" ry="2.9" fill="#fff"/><ellipse cx="494.5" cy="804.9" rx="2.1" ry="1.4" fill="#a8a8a8"/><ellipse cx="576.0" cy="826.4" rx="2.9" ry="2.3" fill="#a8a8a8"/><ellipse cx="478.2" cy="820.1" rx="4.2" ry="2.6" fill="#a8a8a8"/><ellipse cx="525.4" cy="803.2" rx="3.9" ry="1.7" fill="#a8a8a8"/><ellipse cx="584.6" cy="810.9" rx="2.7" ry="2.9" fill="#a8a8a8"/><ellipse cx="488.4" cy="801.4" rx="2.0" ry="2.8" fill="#a8a8a8"/><ellipse cx="485.5" cy="825.9" rx="4.4" ry="2.3" fill="#fff"/><ellipse cx="533.8" cy="801.6" rx="1.5" ry="2.9" fill="#a8a8a8"/><ellipse cx="531.2" cy="829.7" rx="2.8" ry="2.7" fill="#a8a8a8"/><ellipse cx="493.3" cy="805.8" rx="2.4" ry="1.5" fill="#fff"/><ellipse cx="499.1" cy="811.7" rx="1.9" ry="2.8" fill="#fff"/><ellipse cx="523.0" cy="817.4" rx="4.2" ry="1.8" fill="#a8a8a8"/><ellipse cx="528.2" cy="815.6" rx="3.1" ry="1.0" fill="#fff"/><ellipse cx="490.0" cy="797.1" rx="3.9" ry="1.3" fill="#fff"/><ellipse cx="555.0" cy="816.5" rx="2.5" ry="2.0" fill="#fff"/><ellipse cx="562.1" cy="800.7" rx="3.2" ry="1.5" fill="#fff"/><ellipse cx="560.7" cy="814.8" rx="3.2" ry="2.5" fill="#a8a8a8"/><ellipse cx="521.2" cy="818.4" rx="3.0" ry="2.0" fill="#a8a8a8"/><ellipse cx="522.3" cy="815.7" rx="2.9" ry="2.9" fill="#a8a8a8"/><ellipse cx="573.2" cy="830.0" rx="2.3" ry="2.1" fill="#a8a8a8"/><ellipse cx="568.8" cy="801.8" rx="1.9" ry="1.9" fill="#fff"/><ellipse cx="496.9" cy="799.6" rx="3.5" ry="2.6" fill="#a8a8a8"/><ellipse cx="486.5" cy="822.1" rx="3.5" ry="1.3" fill="#a8a8a8"/><ellipse cx="584.1" cy="804.7" rx="4.4" ry="1.8" fill="#fff"/><ellipse cx="586.8" cy="826.1" rx="2.0" ry="1.9" fill="#fff"/><ellipse cx="508.7" cy="803.9" rx="2.5" ry="2.4" fill="#fff"/><ellipse cx="534.5" cy="812.4" rx="1.6" ry="1.7" fill="#a8a8a8"/><ellipse cx="529.5" cy="799.3" rx="4.5" ry="2.6" fill="#a8a8a8"/><ellipse cx="480.6" cy="806.3" rx="1.6" ry="2.6" fill="#fff"/><ellipse cx="483.5" cy="811.8" rx="4.2" ry="2.6" fill="#fff"/><ellipse cx="485.9" cy="829.2" rx="3.2" ry="2.4" fill="#fff"/><ellipse cx="474.9" cy="821.1" rx="2.8" ry="1.1" fill="#a8a8a8"/><ellipse cx="444.4" cy="830.2" rx="1.2" ry="2.3" fill="#fff"/><ellipse cx="460.4" cy="823.6" rx="1.8" ry="1.8" fill="#2233ee"/><ellipse cx="418.8" cy="817.5" rx="2.3" ry="1.4" fill="#fff"/><ellipse cx="411.3" cy="816.0" rx="1.5" ry="1.5" fill="#fff"/><ellipse cx="453.2" cy="820.5" rx="2.3" ry="1.3" fill="#fff"/><ellipse cx="401.3" cy="819.8" rx="1.0" ry="2.1" fill="#fff"/><ellipse cx="413.3" cy="824.0" rx="3.3" ry="1.2" fill="#2233ee"/><ellipse cx="430.3" cy="824.4" rx="3.1" ry="1.6" fill="#fff"/><ellipse cx="448.1" cy="833.7" rx="1.9" ry="2.2" fill="#2233ee"/><ellipse cx="444.5" cy="822.7" rx="1.9" ry="1.1" fill="#fff"/><ellipse cx="405.0" cy="829.1" rx="1.6" ry="1.2" fill="#fff"/><ellipse cx="458.9" cy="831.5" rx="2.7" ry="1.4" fill="#fff"/><ellipse cx="420.5" cy="823.7" rx="1.4" ry="1.7" fill="#fff"/><ellipse cx="467.3" cy="833.5" rx="2.4" ry="1.4" fill="#2233ee"/><ellipse cx="421.7" cy="821.8" rx="1.0" ry="1.6" fill="#fff"/><ellipse cx="435.2" cy="818.8" rx="2.3" ry="1.0" fill="#fff"/><ellipse cx="406.3" cy="822.6" rx="1.1" ry="1.0" fill="#fff"/><ellipse cx="416.3" cy="826.1" rx="2.3" ry="2.1" fill="#fff"/><ellipse cx="450.1" cy="831.7" rx="2.0" ry="1.5" fill="#2233ee"/><ellipse cx="410.5" cy="828.8" rx="2.6" ry="1.1" fill="#2233ee"/><ellipse cx="462.4" cy="826.9" rx="2.8" ry="2.2" fill="#fff"/><ellipse cx="436.7" cy="824.6" rx="3.1" ry="2.2" fill="#2233ee"/><ellipse cx="440.9" cy="832.0" rx="2.7" ry="2.0" fill="#fff"/><ellipse cx="402.2" cy="817.5" rx="1.9" ry="1.2" fill="#2233ee"/><ellipse cx="439.1" cy="826.9" rx="2.6" ry="2.0" fill="#fff"/><ellipse cx="400.2" cy="830.2" rx="2.9" ry="1.8" fill="#fff"/><ellipse cx="446.2" cy="816.3" rx="2.8" ry="1.4" fill="#fff"/><ellipse cx="418.6" cy="828.9" rx="1.5" ry="2.1" fill="#2233ee"/><ellipse cx="434.6" cy="822.3" rx="2.2" ry="2.0" fill="#2233ee"/><ellipse cx="443.2" cy="827.2" rx="1.2" ry="1.2" fill="#fff"/><ellipse cx="452.0" cy="820.8" rx="2.4" ry="1.0" fill="#fff"/><ellipse cx="418.8" cy="827.8" rx="2.7" ry="2.0" fill="#fff"/><ellipse cx="436.2" cy="823.8" rx="2.2" ry="1.2" fill="#2233ee"/><ellipse cx="413.9" cy="833.6" rx="3.3" ry="1.0" fill="#fff"/><ellipse cx="457.4" cy="833.4" rx="2.1" ry="1.4" fill="#fff"/><ellipse cx="466.2" cy="819.0" rx="2.5" ry="1.2" fill="#fff"/><ellipse cx="466.7" cy="817.5" rx="3.1" ry="1.8" fill="#2233ee"/><ellipse cx="449.2" cy="819.4" rx="3.2" ry="1.7" fill="#fff"/><ellipse cx="400.3" cy="824.3" rx="2.1" ry="1.5" fill="#fff"/><ellipse cx="424.1" cy="821.0" rx="3.1" ry="1.0" fill="#2233ee"/></g><rect x="405" y="631" width="1.6" height="1" fill="#6a6ae6" opacity="0.8"/><rect x="422.5" y="640" width="1.6" height="1" fill="#6a6ae6" opacity="0.8"/><rect x="510.5" y="632.5" width="1.6" height="1" fill="#6a6ae6" opacity="0.8"/><rect x="510" y="655" width="1.6" height="1" fill="#6a6ae6" opacity="0.8"/><rect x="553.5" y="652.5" width="1.6" height="1" fill="#6a6ae6" opacity="0.8"/><rect x="448.5" y="679" width="1.6" height="1" fill="#6a6ae6" opacity="0.8"/><rect x="549" y="692" width="1.6" height="1" fill="#6a6ae6" opacity="0.8"/><rect x="536" y="698" width="1.6" height="1" fill="#6a6ae6" opacity="0.8"/><rect x="674.5" y="625.5" width="1.6" height="1" fill="#6a6ae6" opacity="0.8"/><rect x="627" y="669" width="1.6" height="1" fill="#6a6ae6" opacity="0.8"/><rect x="618" y="685" width="1.6" height="1" fill="#6a6ae6" opacity="0.8"/><rect x="719.5" y="655" width="1.6" height="1" fill="#6a6ae6" opacity="0.8"/></svg></div><!--/bigimg-->
<div class="track" style="left:1004.5px;top:624.3px;width:18.5px;height:210.1px"></div>
<div class="thumb" style="left:1007.7px;top:627.7px;width:12.3px;height:108px"></div>
</div><!--/resview-->
<!-- METRICS -->
<div id="metrics"><svg class="abs" style="left:1045px;top:263px" width="12" height="13"><rect x="1" y="1.1" width="10" height="2.1" fill="#0a0a0a"/><path d="M1 5.1 L11 5.1 L6 11.6 Z" fill="#0a0a0a"/></svg>
<div class="tab" style="left:1060.4px;top:260.3px;width:90.4px"><svg width="90.4" height="23.8"><path d="M0 23.8 C2 23.8 3.6 22.8 5.2 19.8 L14.8 2 C15.3 0.8 16.1 0 17.8 0 L72.60000000000001 0 C74.30000000000001 0 75.10000000000001 0.8 75.60000000000001 2 L85.2 19.8 C86.80000000000001 22.8 88.4 23.8 90.4 23.8 Z" fill="#dcdfe4"/></svg><div class="t" style="left:18px;top:-0.2px;letter-spacing:0.0px">Metrics</div></div>
<div class="tab" style="left:1274px;top:260.3px;width:132.2px"><svg width="132.2" height="23.8"><path d="M0 23.8 C2 23.8 3.6 22.8 5.2 19.8 L14.8 2 C15.3 0.8 16.1 0 17.8 0 L114.39999999999999 0 C116.1 0 116.89999999999999 0.8 117.39999999999999 2 L126.99999999999999 19.8 C128.6 22.8 130.2 23.8 132.2 23.8 Z" fill="#dcdfe4"/></svg><div class="t" style="left:18px;top:-0.2px;letter-spacing:0.14px">Experiments</div></div>
<div class="tab" style="left:1133.4px;top:260.3px;width:158.4px"><svg width="158.4" height="23.8"><path d="M0 23.8 C2 23.8 3.6 22.8 5.2 19.8 L14.8 2 C15.3 0.8 16.1 0 17.8 0 L140.6 0 C142.29999999999998 0 143.1 0.8 143.6 2 L153.20000000000002 19.8 C154.8 22.8 156.4 23.8 158.4 23.8 Z" fill="#c0c3c9"/></svg><div class="t" style="left:17.8px;top:-0.2px;letter-spacing:0.08px">Metrics Analysis</div></div>
<div class="abs tabline" style="left:1037px;top:284px;width:458px"></div>
<div class="abs" style="left:1042px;top:293.4px;width:448.2px;height:381.4px;border:1px solid #979da8;box-sizing:border-box"></div>
<div class="abs" style="left:1043px;top:294.4px;width:443px;height:362.1px;overflow:hidden"><div class="nb g" style="left:11.8px;top:14.3px;width:322.3px"><span>Graphics Interface to Memory Hierarchy</span></div><div class="nb g" style="left:110.3px;top:59.4px;width:125.5px"><span>Pixel Back-End</span></div><div class="nb g" style="left:47.2px;top:104.4px;width:251.8px"><span>Shader Execution FPU Pipe 0/1</span></div><div class="nb y" style="left:57.4px;top:149.4px;width:231.0px"><span>Shader Thread EU Occpancy</span></div><div class="nb k" style="left:74.0px;top:194.5px;width:198.0px"><span>Shader Thread Dispatch</span></div><div class="nb k" style="left:92.8px;top:239.6px;width:160.2px"><span>Early Depth/Stencil</span></div><div class="nb k" style="left:117.0px;top:284.6px;width:112.3px"><span>Rasterization</span></div><div class="nb k" style="left:68.0px;top:329.6px;width:210.5px"><span>Geometry Transformation</span></div><div class="nb k" style="left:320.4px;top:59.4px;width:159.6px;text-align:left;letter-spacing:0.42px"><span style="padding-left:5.6px">Post PS Operations</span></div><div class="nb k" style="left:350.6px;top:104.4px;width:99.4px;text-align:left;letter-spacing:0.42px"><span style="padding-left:5.6px">Color Write</span></div><div class="nb y" style="left:297.7px;top:149.4px;width:205.3px;text-align:left;letter-spacing:0.42px"><span style="padding-left:5.6px">Shader Execution Stall</span></div><div class="nb k" style="left:287.8px;top:194.5px;width:225.2px;text-align:left;letter-spacing:0.42px"><span style="padding-left:5.6px">Unknown Shader Execution</span></div><svg class="abs" style="left:0;top:0" width="443" height="362" fill="none" stroke="#444" stroke-width="1.5"><path d="M173.4 44.3 L173.4 58.9 M169.8 55.0 L173.4 58.9 L177.0 55.0" /><path d="M173.4 89.4 L173.4 103.9 M169.8 100.0 L173.4 103.9 L177.0 100.0" /><path d="M173.4 134.4 L173.4 148.9 M169.8 145.0 L173.4 148.9 L177.0 145.0" /><path d="M173.4 179.4 L173.4 194.0 M169.8 190.1 L173.4 194.0 L177.0 190.1" /><path d="M173.4 224.5 L173.4 239.1 M169.8 235.2 L173.4 239.1 L177.0 235.2" /><path d="M173.4 269.6 L173.4 284.1 M169.8 280.2 L173.4 284.1 L177.0 280.2" /><path d="M173.4 314.6 L173.4 329.1 M169.8 325.2 L173.4 329.1 L177.0 325.2" /><path d="M400.4 89.4 L400.4 103.9 M396.8 100.0 L400.4 103.9 L404.0 100.0" /><path d="M400.4 179.4 L400.4 194.0 M396.8 190.1 L400.4 194.0 L404.0 190.1" /><path d="M235.8 74.9 L319.9 74.9 M316.0 71.3 L319.9 74.9 L316.0 78.5" /><path d="M288.4 164.9 L297.2 164.9 M293.3 161.3 L297.2 164.9 L293.3 168.5" /></svg></div>
<div class="track" style="left:1043px;top:656.5px;width:446.2px;height:17.3px"></div>
<div class="thumb" style="left:1047.2px;top:660.2px;width:273.7px;height:10.6px"></div>
<div class="abs dline" style="left:1037px;top:680px;width:458px"></div>
<div class="t" style="left:1042px;top:683.6px;letter-spacing:0.22px">This chart will help you determine the location of</div>
<div class="t" style="left:1042px;top:702.5px;letter-spacing:0.22px">bottlenecks in the hardware pipeline for currently</div>
<div class="t" style="left:1042px;top:721.3px;letter-spacing:0.22px">selected ergs. For details on each section, click on its</div>
<div class="t" style="left:1042px;top:740.1px;letter-spacing:0.22px">corresponding box.</div>
</div><!--/metrics-->
<!-- FRAME SCRUBBER -->
<div id="scrubber"><div class="tab" style="left:9.3px;top:853.6px;width:158px"><svg width="158" height="23.8"><path d="M0 23.8 C2 23.8 3.6 22.8 5.2 19.8 L14.8 2 C15.3 0.8 16.1 0 17.8 0 L140.2 0 C141.89999999999998 0 142.7 0.8 143.2 2 L152.8 19.8 C154.4 22.8 156 23.8 158 23.8 Z" fill="#c0c3c9"/></svg><div class="t" style="left:18px;top:-0.2px;letter-spacing:0.33px">Frame Scrubber</div></div>
<div class="abs tabline" style="left:5px;top:877.3px;width:1489px"></div>
<div class="abs" style="left:9.3px;top:886.6px;width:1481.5px;height:25.1px;border:1px solid #8d939e;background:#dadde2;box-sizing:border-box"></div>
<div class="t" style="left:700px;width:100px;text-align:center;top:888.5px">746</div>
<div class="abs" style="left:1142.5px;top:889px;width:11.5px;height:20px;background:#0a6fc5"></div>
</div><!--/scrubber-->
</body></html>
